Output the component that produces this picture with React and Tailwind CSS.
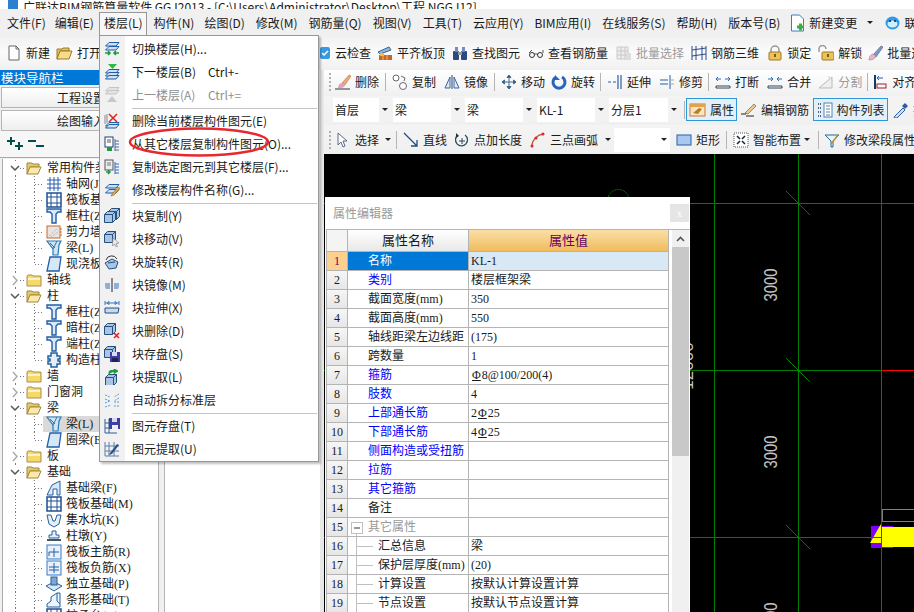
import React from 'react';

const Svg = ({ children, w = 16, h = 16 }) => (
  <svg width={w} height={h} viewBox={`0 0 ${w} ${h}`} className="shrink-0">{children}</svg>
);

const B = '#1f5fa8';
const Plate = ({ y = 0, f = '#cfe0f5', s = B }) => (
  <path d={`M5 ${y + 0.5}h10l-3 3.5H1.5z`} fill={f} stroke={s} />
);
const Cube = ({ x = 1, y = 1, f = '#a9c4e4', s = '#24507f' }) => (
  <g>
    <path d={`M${x + 0.5} ${y + 3.5}l3-3h8v8l-3 3h-8z`} fill={f} stroke={s} />
    <path d={`M${x + 0.5} ${y + 3.5}h8v8M${x + 8.5} ${y + 3.5}l3-3`} fill="none" stroke={s} />
  </g>
);

// menu icons
const MI = {
  switch: <Svg><Plate y={1} /><Plate y={5} /><path d="M1 12h5M4 10l2 2-2 2M15 12h-5M12 10l-2 2 2 2" fill="none" stroke="#1d9a3c" strokeWidth="1.6" /></Svg>,
  down: <Svg><path d="M4 0h9l-4.5 5z" fill="#2fb84a" /><Plate y={5} /><Plate y={8} /><Plate y={11} /></Svg>,
  up: <Svg><Plate y={0} f="#e4e4e4" s="#c4c4c4" /><Plate y={3} f="#e4e4e4" s="#c4c4c4" /><path d="M8 9l5 6H3z" fill="#c8c8c8" /></Svg>,
  del: <Svg><path d="M1 2v9M3 1v9" stroke="#8a8a8a" /><Plate y={9} /><Plate y={11} /><path d="M5 1l8 8M13 1L5 9" stroke="#e02020" strokeWidth="1.5" /></Svg>,
  copyFrom: <Svg><rect x="1" y="1" width="8" height="10" fill="#fff" stroke="#1f3f7a" /><path d="M3 4h4M3 6h4" stroke="#555" /><path d="M3 11h5v4H3z" fill="#1d9a3c" /><path d="M11 5h4M11 8h4M11 11h4M11 14h4M11 3v12" stroke="#4a6f9a" fill="none" /></Svg>,
  copyTo: <Svg><rect x="1" y="1" width="8" height="10" fill="#eee" stroke="#555" /><path d="M3 4h4M3 6h4" stroke="#777" /><path d="M2 13h4M4 11l2 2-2 2" stroke="#1d9a3c" strokeWidth="1.5" fill="none" /><path d="M11 5h4M11 8h4M11 11h4M11 14h4M11 3v12" stroke="#2f6fc0" fill="none" /></Svg>,
  rename: <Svg><Plate y={2} /><Plate y={7} /><path d="M8 12l6-7 2 1-6 7-3 1z" fill="#e8a93a" stroke="#8a6a20" strokeWidth=".6" /></Svg>,
  bCopy: <Svg><Cube x={4} y={0} /><Cube x={0} y={3} /></Svg>,
  bMove: <Svg><Cube x={0} y={0} /><path d="M9 7l6 5-3 .5 1.5 3-1.5.5-1.5-3-2 2z" fill="#eee" stroke="#888" strokeWidth=".7" /></Svg>,
  bRot: <Svg><path d="M2 6a6 6 0 0 1 11-1" fill="none" stroke="#333" /><path d="M1 9l7-4 6 3-2 6-7 1z" fill="#a9c4e4" stroke="#24507f" /><path d="M4 9l7-1" stroke="#24507f" /></Svg>,
  bMirror: <Svg><path d="M8 1v14" stroke="#222" /><path d="M1 6h5v6H2l-1-2z" fill="#8fb0d6" /><path d="M15 6h-5v6h4l1-2z" fill="#8fb0d6" /></Svg>,
  bStretch: <Svg><path d="M1 3h14M1 1v4M15 1v4M3 3l2-1.5v3zM13 3l-2-1.5v3z" stroke="#3a7cc8" fill="none" /><path d="M1 8h14l-1 5H1z" fill="#c7d9ee" stroke="#24507f" /></Svg>,
  bDel: <Svg><Cube x={0} y={0} /><path d="M10 10l5 5M15 10l-5 5" stroke="#e02020" strokeWidth="1.5" /></Svg>,
  bSave: <Svg><Cube x={0} y={0} /><rect x="6" y="6" width="10" height="10" fill="#3e3e9e" /><rect x="8" y="6" width="5" height="4" fill="#d8d8f0" /><rect x="8" y="12" width="6" height="4" fill="#222258" /></Svg>,
  bGet: <Svg><path d="M5 5v-1.500a2 2 0 0 1 2-2h5M10 0l4 2-4 2.500z" fill="#1d9a3c" stroke="#1d9a3c" /><Cube x={1} y={5} /></Svg>,
  auto: <Svg><path d="M1 3l5 2M1 7l5 2M1 11l5-2M1 15l6-2M15 2l-5 3M15 6l-5 3M15 10h-5M15 14h-6" stroke="#5b9bd5" strokeDasharray="2 1" /></Svg>,
  eSave: <Svg><path d="M1 1v14h12M1 5h9M1 10h9M5 1v14" stroke="#2f5f9a" fill="none" /><rect x="5" y="0" width="11" height="11" fill="#3e3e9e" /><rect x="8" y="0" width="5" height="4" fill="#d8d8f0" /><rect x="8" y="7" width="6" height="4" fill="#eee" /></Svg>,
  eGet: <Svg><path d="M1 1v14h14M1 5h14M1 10h14M5 1v14M10 1v14" stroke="#5c7fa8" fill="none" /><path d="M6 12l7-9 2 1-7 9-3 1z" fill="#2f4f8f" /></Svg>,
};

const menu = [
  { i: 'switch', t: '切换楼层(H)...' },
  { i: 'down', t: '下一楼层(B)', k: 'Ctrl+-' },
  { i: 'up', t: '上一楼层(A)', k: 'Ctrl+=', off: true },
  null,
  { i: 'del', t: '删除当前楼层构件图元(E)' },
  { i: 'copyFrom', t: '从其它楼层复制构件图元(O)...' },
  { i: 'copyTo', t: '复制选定图元到其它楼层(F)...' },
  { i: 'rename', t: '修改楼层构件名称(G)...' },
  null,
  { i: 'bCopy', t: '块复制(Y)' },
  { i: 'bMove', t: '块移动(V)' },
  { i: 'bRot', t: '块旋转(R)' },
  { i: 'bMirror', t: '块镜像(M)' },
  { i: 'bStretch', t: '块拉伸(X)' },
  { i: 'bDel', t: '块删除(D)' },
  { i: 'bSave', t: '块存盘(S)' },
  { i: 'bGet', t: '块提取(L)' },
  { i: 'auto', t: '自动拆分标准层' },
  null,
  { i: 'eSave', t: '图元存盘(T)' },
  { i: 'eGet', t: '图元提取(U)' },
];

function FloorMenu() {
  return (
    <div className="absolute left-[-5px] top-[25px] z-50 w-[220px] h-[427px] border border-[#979797] bg-white py-[1px] shadow-[2px_2px_2px_rgba(0,0,0,0.25)]">
      <div className="absolute left-0 top-0 bottom-0 w-[25px] bg-[#f1f1f1]" />
      {menu.map((m, i) =>
        m ? (
          <div key={i} className={`relative flex items-center h-[23px] ${m.off ? 'text-[#8f8f8f]' : 'text-[#1a1a1a]'}`}>
            <span className="w-[32px] pl-[4px] flex items-center">{MI[m.i]}</span>
            <span className="w-[76px] whitespace-nowrap">{m.t}</span>
            {m.k && <span className="whitespace-nowrap">{m.k}</span>}
          </div>
        ) : (
          <div key={i} className="relative h-[3px] ml-[32px] mr-[1px] border-b border-[#c4c4c4]" />
        )
      )}
      <svg width="146" height="32" className="absolute left-[28px] top-[90px]">
        <ellipse cx="71" cy="16" rx="69" ry="13.500" fill="none" stroke="#e8282f" strokeWidth="2.500" />
      </svg>
    </div>
  );
}

const menuBar = [['文件(F)', '-mr-[2px]'], ['编辑(E)', '-mr-[1px]'], ['楼层(L)'], ['构件(N)', '-mr-[1px]'], ['绘图(D)'], ['修改(M)'], ['钢筋量(Q)'], ['视图(V)'], ['工具(T)'], ['云应用(Y)'], ['BIM应用(I)'], ['在线服务(S)'], ['帮助(H)'], ['版本号(B)']];

function MenuBar() {
  return (
    <div className="h-[26px] pt-[1px] bg-[#f0f0f0] flex items-center pl-[7px] gap-[11px] text-[#1a1a1a] whitespace-nowrap shrink-0">
      {menuBar.map(([t, cls]) =>
        t === '楼层(L)' ? (
          <div key={t} className="relative h-[25px] flex items-center">
            <div className="absolute left-[-5px] right-[-4px] top-[2px] bottom-0 border border-b-0 border-[#979797] bg-[#f7f7f7]" />
            <span className="relative">{t}</span>
            <FloorMenu />
          </div>
        ) : (
          <span key={t} className={cls}>{t}</span>
        )
      )}
      <span className="-ml-[2px] flex">
        <Svg w={17} h={18}>
          <path d="M2.500 1h8l4 4v12h-12z" fill="#fff" stroke="#3a7cc8" />
          <path d="M8 13h7M11.500 9.500v7" stroke="#3fae3f" strokeWidth="3" />
        </Svg>
      </span>
      <span className="-ml-[8px]">新建变更</span>
      <Arrow className="ml-[-1px]" />
      <Svg w={17} h={16}>
        <ellipse cx="8.500" cy="8" rx="7" ry="6.500" fill="#2f9ae8" />
        <ellipse cx="8.500" cy="9" rx="5" ry="3.500" fill="#cfefff" />
        <circle cx="6" cy="6" r="1" fill="#123" /><circle cx="11" cy="6" r="1" fill="#123" />
      </Svg>
      <span className="-ml-[8px]">联系我们</span>
    </div>
  );
}

const Arrow = ({ className = '' }) => (
  <span className={`inline-block w-0 h-0 border-x-[3px] border-x-transparent border-t-[3px] border-t-[#222] shrink-0 ${className}`} />
);

// toolbar icons
const TI = {
  newf: <Svg><path d="M3 1h7l3 3v11H3z" fill="#fff" stroke="#666" /><path d="M10 1v3h3" fill="none" stroke="#666" /></Svg>,
  open: <Svg w={17}><path d="M1 4h5l1-1h6v3H4l-2 8H1z" fill="#e8c060" stroke="#9a7a20" /><path d="M4 6h12l-3 8H1z" fill="#f6dc8c" stroke="#9a7a20" /></Svg>,
  cloud: <Svg w={11}><rect x="0" y="2" width="10" height="12" rx="2" fill="#3a9ae0" /><path d="M2 8l2 2 4-4" stroke="#fff" fill="none" strokeWidth="1.500" /></Svg>,
  flush: <Svg><path d="M1 7l11-5 2 3L3 9z" fill="#8fb8e0" stroke="#3a5f90" /><rect x="2" y="10" width="13" height="5" fill="#c8652a" /><path d="M6 10v5M10 10v5" stroke="#efc040" /><rect x="3" y="8" width="4" height="3" fill="#efc040" /></Svg>,
  find: <Svg><rect x="1" y="6" width="6" height="9" rx="1" fill="#2a4a80" /><rect x="9" y="6" width="6" height="9" rx="1" fill="#2a4a80" /><rect x="3" y="2" width="3" height="5" fill="#6f8fbf" /><rect x="10" y="2" width="3" height="5" fill="#6f8fbf" /><rect x="6" y="7" width="4" height="3" fill="#999" /></Svg>,
  glasses: <Svg><circle cx="4" cy="10" r="2.500" fill="none" stroke="#333" /><circle cx="12" cy="10" r="2.500" fill="none" stroke="#333" /><path d="M6 9h4M1 8l3-3M15 8V5" stroke="#555" fill="none" /></Svg>,
  batch: <Svg><path d="M1 2h11v12H1zM1 6h11M1 10h11M5 2v12M9 2v12" fill="#eee" stroke="#c8c8c8" /><path d="M10 8h5v7h-5z" fill="#ddd" /></Svg>,
  rebar3d: <Svg><path d="M1 1v14M15 1v14M5 1v14M11 1v14M1 5l14-2M1 11l14-2" stroke="#2a4a90" fill="none" /></Svg>,
  lock: <Svg><path d="M4 8V5a4 4 0 0 1 8 0v3" fill="none" stroke="#999" strokeWidth="1.500" /><rect x="2" y="7" width="12" height="8" rx="1" fill="#ecc35a" stroke="#a07820" /><path d="M8 9v3" stroke="#503a10" strokeWidth="1.500" /></Svg>,
  unlock: <Svg><path d="M1 7V4a3.500 3.500 0 0 1 7 0" fill="none" stroke="#999" strokeWidth="1.500" /><rect x="4" y="7" width="12" height="8" rx="1" fill="#ecc35a" stroke="#a07820" /><path d="M10 9v3" stroke="#503a10" strokeWidth="1.500" /></Svg>,
  brush: <Svg><path d="M6 10L14 1l2 1-7 10z" fill="#7a9ad0" stroke="#345" strokeWidth=".5" /><path d="M2 15c0-3 2-6 4-6l3 2c-1 3-4 4-7 4z" fill="#e8b8c8" stroke="#a06070" strokeWidth=".5" /></Svg>,
  erase: <Svg><path d="M7 9L14 1l2 1-6 9z" fill="#e8b060" stroke="#805" strokeWidth=".3" /><path d="M3 14c0-3 2-5 4-5l3 2c-1 3-3 3-7 3z" fill="#e0a0c0" /><path d="M0 15h15" stroke="#333" /></Svg>,
  copy: <Svg><circle cx="4" cy="4" r="3" fill="#fff" stroke="#667" /><circle cx="11" cy="12" r="3.500" fill="#fff" stroke="#667" /><path d="M9 2l4 2-1 3" stroke="#667" fill="none" /></Svg>,
  mirror: <Svg><path d="M8 1v14" stroke="#345" /><path d="M6 3L1 14h5zM10 3l5 11h-5z" fill="#dfe9f6" stroke="#3a66a8" /></Svg>,
  move: <Svg><path d="M8 1v14M1 8h14M8 1L6 3.500h4zM8 15l-2-2.500h4zM1 8l2.500-2v4zM15 8l-2.500-2v4z" fill="#345" stroke="#456a90" /></Svg>,
  rotate: <Svg><path d="M5 3a6 6 0 1 0 6 0" fill="none" stroke="#2a62c0" strokeWidth="3" /><path d="M4 1v5h5" fill="#2a62c0" /></Svg>,
  extend: <Svg><path d="M1 8h3M6 8h3M11 1v14M14 1v14" stroke="#2a5fa8" fill="none" strokeWidth="1.200" /></Svg>,
  trim: <Svg><path d="M1 6h8M1 10h8M11 1v14" stroke="#2a5fa8" fill="none" /><path d="M12 6h3M12 10h3" stroke="#9ab" /></Svg>,
  brk: <Svg><path d="M1 5h5M10 5h5M3 3L1 5l2 2M13 3l2 2-2 2" stroke="#2a6fc0" fill="none" /><path d="M1 12h14v2H1z" fill="#fff" stroke="#345" /></Svg>,
  merge: <Svg><path d="M1 5h5M10 5h5M4 3l2 2-2 2M12 3l-2 2 2 2" stroke="#2a6fc0" fill="none" /><path d="M1 12h14v2H1z" fill="#fff" stroke="#345" /></Svg>,
  split: <Svg><path d="M1 14L14 3v11z" fill="#eee" stroke="#bbb" /><path d="M10 2l5 5" stroke="#ccc" /></Svg>,
  align: <Svg w={14}><path d="M1 1v14" stroke="#123a6a" strokeWidth="2" /><path d="M3 4h6M3 4l2-2M3 4l2 2" stroke="#2a5fa8" fill="none" /><rect x="3" y="10" width="9" height="4" fill="none" stroke="#a02030" /></Svg>,
  prop: <Svg w={17}><rect x="1" y="2" width="15" height="12" fill="#fbe6c0" stroke="#c87830" /><path d="M1 2h15v3H1z" fill="#e8a04a" /><path d="M4 11l6-5 3 1-4 5z" fill="#b08030" /></Svg>,
  editbar: <Svg><path d="M4 11L13 2l2 2-8 8z" fill="#e8c890" stroke="#554" strokeWidth=".6" /><path d="M0 12h5M5 14h8" stroke="#222" /></Svg>,
  list: <Svg><path d="M1 2h3M1 6h3M1 10h3M1 14h3" stroke="#567" strokeDasharray="1 1" strokeWidth="2" /><rect x="7" y="1" width="8" height="14" fill="#fff" stroke="#5a7fa8" /><path d="M9 4h4M9 7h4M9 10h4M9 13h4" stroke="#5a7fa8" /></Svg>,
  pick: <Svg><path d="M2 14l8-8 2 2-8 8-3 0z" fill="#cfe0f5" stroke="#2a5fa8" /><path d="M9 4l3-3 3 3-3 3z" fill="#2a5fa8" /></Svg>,
  select: <Svg><path d="M3 1v12l3-3 2 5 2-1-2-5h4z" fill="#fff" stroke="#5a6a88" /></Svg>,
  line: <Svg><path d="M1 1l13 13M14 8v6H8" stroke="#234a80" fill="none" strokeWidth="1.300" /></Svg>,
  ptlen: <Svg><path d="M11 3a6 6 0 1 1-7 0" fill="none" stroke="#2a5068" strokeWidth="1.300" /><path d="M8 6v6M5 9h6" stroke="#345" /><path d="M2 1l3 3-3 2z" fill="#234" /></Svg>,
  arc: <Svg><path d="M2 14C2 8 7 3 13 2" fill="none" stroke="#c05a30" strokeWidth="1.300" /><circle cx="2" cy="14" r="1.500" fill="#d23" /><circle cx="6" cy="6" r="1.500" fill="#d23" /><circle cx="13" cy="2" r="1.500" fill="#d23" /></Svg>,
  rect: <Svg><rect x="1" y="3" width="14" height="10" fill="#a9c8f0" stroke="#2a5fa8" /></Svg>,
  smart: <Svg><rect x="1" y="1" width="14" height="14" fill="#fff" stroke="#555" strokeDasharray="1 1" /><path d="M4 4l3 3M12 4L9 7M4 12l3-3M12 12L9 9" stroke="#123" strokeWidth="1.500" /></Svg>,
  seg: <Svg><path d="M1 3h14L9 9v6H7V9z" fill="#e8f3fb" stroke="#2a6a90" /><path d="M7 12l7-9" stroke="#b89040" strokeWidth="1.500" /></Svg>,
};

const Tool = ({ i, t, off, mr = 'mr-[8px]' }) => (
  <div className={`flex items-center gap-[4px] shrink-0 whitespace-nowrap ${mr} ${off ? 'text-[#9a9a9a]' : 'text-[#1a1a1a]'}`}>
    {TI[i]}
    <span>{t}</span>
  </div>
);
const Sep = () => <span className="w-px h-[18px] bg-[#b5b5b5] -ml-[2px] mr-[6px] shrink-0" />;
const Grip = () => (
  <span className="w-[2px] h-[18px] ml-[5px] mr-[4px] shrink-0 border-l-2 border-dotted border-[#b0b0b0]" />
);

function Combo({ t, w }) {
  return (
    <div className={`${w} h-[24px] bg-white flex items-center justify-between mr-[2px] shrink-0`}>
      <span className="pl-[2px]">{t}</span>
      <span className="w-[12px] h-full bg-[#f2f2f2] flex items-center justify-center"><Arrow /></span>
    </div>
  );
}

function Toggle({ i, t, w }) {
  return (
    <div className={`${w} h-[23px] flex items-center justify-center gap-[4px] border-[1.5px] border-[#2f96d8] bg-[#e3f0fa] shrink-0`}>
      {TI[i]}<span>{t}</span>
    </div>
  );
}

// tree icons
const Col = <Svg><path d="M1 1h14v3h-3L10 6v9H6V6L4 4H1z" fill="#dbe8f7" stroke="#1f5fa8" strokeWidth="1.400" /></Svg>;
const Raft = <Svg><rect x="1" y="1" width="14" height="14" fill="#fff" stroke="#1f4f90" strokeWidth="1.500" /><path d="M5 1v14M11 1v14M1 5h14M1 11h14" stroke="#1f4f90" /></Svg>;
const Beam = <Svg><path d="M1 1h14l-2 4-1 10H7V9z" fill="#cfe4f5" stroke="#2a7ab0" strokeWidth="1.200" /><path d="M4 3l5 5M11 1L7 9" stroke="#2a7ab0" /></Svg>;
const Slab = <Svg><path d="M4 1h11l-2 14H1z" fill="#d6e7f8" stroke="#1f5fa8" strokeWidth="1.300" /></Svg>;
const TIcons = {
  grid: <Svg><path d="M1 4h14M1 8h14M1 12h14M4 1v14M8 1v14M12 1v14" stroke="#2a5fb0" fill="none" /></Svg>,
  raft: Raft, col: Col, beam: Beam, slab: Slab,
  wall: <Svg><rect x="1" y="2" width="13" height="12" fill="#e8e4e0" stroke="#c8682a" /><path d="M14 5h2M14 8h2M14 11h2" stroke="#c8682a" /><path d="M3 12l8-7M5 13l7-5" stroke="#aaa" strokeDasharray="1 1" /></Svg>,
  gear: <Svg><path d="M5 1h6v3h3v3h-2v2h2v3h-3v3H5v-3H2V9h2V7H2V4h3z" fill="#e6eef8" stroke="#24609f" strokeWidth="1.500" /></Svg>,
  fbeam: <Svg><path d="M1 15L6 5l8-4v14h-3V9L7 9v6z" fill="#dbe8f7" stroke="#24609f" /></Svg>,
  sump: <Svg><path d="M1 3h4l2 6h2l2-6h4L13 12l-5 3-5-3z" fill="#e6eef8" stroke="#24609f" /></Svg>,
  pier: <Svg><path d="M6 3h4v4h3v3H3V7h3z" fill="#e6eef8" stroke="#24609f" /><path d="M1 12h14" stroke="#456" strokeWidth="2" /></Svg>,
  mainb: <Svg><rect x="1" y="1" width="14" height="14" fill="#e8f1fb" stroke="#3a7ac0" /><path d="M8 4v9M3 8h10M3 8v4" stroke="#1f5fa8" fill="none" /></Svg>,
  negb: <Svg><rect x="1" y="1" width="14" height="14" fill="#e8f1fb" stroke="#3a7ac0" /><path d="M8 3v10M3 7h10M3 10h10" stroke="#1f5fa8" /></Svg>,
  iso: <Svg><path d="M0 10l8-4 8 4-8 5z" fill="#dbe8f7" stroke="#24609f" /><rect x="5" y="1" width="6" height="8" fill="#7fa5d0" stroke="#24609f" /></Svg>,
  strip: <Svg><path d="M1 15V12l4-3V5l6-4h3v14z" fill="#eef4fb" stroke="#24609f" /><path d="M11 1v8l3 3" fill="none" stroke="#24609f" /></Svg>,
};

const tree = [
  ['o', '常用构件类型'], ['c', '轴网(J)', 'grid'], ['c', '筏板基础(M)', 'raft'], ['c', '框柱(Z)', 'col'], ['c', '剪力墙(Q)', 'wall'], ['c', '梁(L)', 'beam'], ['l', '现浇板(B)', 'slab'],
  ['f', '轴线'],
  ['o', '柱'], ['c', '框柱(Z)', 'col'], ['c', '暗柱(Z)', 'col'], ['c', '端柱(Z)', 'col'], ['l', '构造柱(Z)', 'gear'],
  ['f', '墙'], ['f', '门窗洞'],
  ['o', '梁'], ['s', '梁(L)', 'beam'], ['l', '圈梁(E)', 'slab'],
  ['f', '板'],
  ['o', '基础'], ['c', '基础梁(F)', 'fbeam'], ['c', '筏板基础(M)', 'raft'], ['c', '集水坑(K)', 'sump'], ['c', '柱墩(Y)', 'pier'], ['c', '筏板主筋(R)', 'mainb'], ['c', '筏板负筋(X)', 'negb'], ['c', '独立基础(P)', 'iso'], ['c', '条形基础(T)', 'strip'], ['c', '桩承台(V)', 'raft'],
];

const dots = '#777';
function TreeRow({ kind, text, icon }) {
  if (kind === 'o' || kind === 'f') {
    return (
      <div className="h-4 flex items-center whitespace-nowrap">
        <svg width="23" height="16" className="shrink-0">
          <path d="M12.500 0v16" stroke={dots} strokeDasharray="1 2" />
          <path d="M17 8.500h6" stroke={dots} strokeDasharray="1 2" />
          <rect x="6" y="3" width="11" height="11" fill="#fff" />
          {kind === 'o'
            ? <path d="M8 6l4 4 4-4" fill="none" stroke="#555" strokeWidth="1.500" />
            : <path d="M10 4l4 4.500-4 4.500" fill="none" stroke="#aaa" strokeWidth="1.500" />}
        </svg>
        <Svg w={16} h={14}>
          {kind === 'o'
            ? <g><path d="M1 2h5l1 1h6v3H4l-3 7z" fill="#e8c868" stroke="#a08840" /><path d="M4 6h11l-3 7H1z" fill="#fbe9a8" stroke="#a08840" /></g>
            : <g><path d="M1 3l1-1h4l1 1h8v10H1z" fill="#f7d868" stroke="#a89050" /><path d="M2 5h12v2H2z" fill="#fff5c8" /></g>}
        </Svg>
        <span className="ml-[5px]">{text}</span>
      </div>
    );
  }
  return (
    <div className="h-4 flex items-center whitespace-nowrap">
      <svg width="40" height="16" className="shrink-0">
        <path d="M12.500 0v16" stroke={dots} strokeDasharray="1 2" />
        <path d={kind === 'l' ? 'M31.500 0v8' : 'M31.500 0v16'} stroke={dots} strokeDasharray="1 2" />
        <path d="M32 8.500h8" stroke={dots} strokeDasharray="1 2" />
      </svg>
      <div className={`flex items-center h-4 gap-[4px] pl-[3px] ${kind === 's' ? 'bg-[#d9d9d9] w-[60px]' : ''}`}>
        {TIcons[icon]}
        <span>{text}</span>
      </div>
    </div>
  );
}

function LeftNav() {
  return (
    <div className="w-[158px] shrink-0 flex flex-col bg-[#f0f0f0] overflow-hidden">
      <div className="h-[15px] bg-[#0078d7] text-white text-[12.5px] leading-[15px] pl-[1px] shrink-0">模块导航栏</div>
      <div className="h-[21px] mt-[2px] mx-[1px] border border-[#b5b5b5] bg-gradient-to-b from-white to-[#eeeeee] flex items-center pl-[55px] shrink-0">工程设置</div>
      <div className="h-[21px] mt-[2px] mx-[1px] border border-[#b5b5b5] bg-gradient-to-b from-white to-[#eeeeee] flex items-center pl-[55px] shrink-0">绘图输入</div>
      <div className="h-[27px] flex items-center pl-[7px] gap-[5px] shrink-0 bg-[#f6f6f6] border-b border-[#a9a9a9]">
        <Svg w={16} h={14}><path d="M4 0v8M0 4h8M12 5v8M8 9h8" stroke="#004f4f" strokeWidth="2" /></Svg>
        <Svg w={16} h={14}><path d="M0 4h8M8 9h8" stroke="#004f4f" strokeWidth="2" /></Svg>
      </div>
      <div className="flex-1 ml-[2px] mt-[1px] pt-[1px] border-l border-[#a9a9a9] bg-white overflow-hidden font-['Liberation_Serif','Noto_Sans_CJK_SC',sans-serif]">
        {tree.map((r, i) => <TreeRow key={i} kind={r[0]} text={r[1]} icon={r[2]} />)}
      </div>
    </div>
  );
}

const Bar = <span className="inline-block underline mx-[1px]">Φ</span>;

const rows = [
  ['名称', 'KL-1', 'sel'],
  ['类别', '楼层框架梁', 'link'],
  ['截面宽度(mm)', '350'],
  ['截面高度(mm)', '550'],
  ['轴线距梁左边线距', '(175)'],
  ['跨数量', '1'],
  ['箍筋', <>{Bar}8@100/200(4)</>, 'link2'],
  ['肢数', '4', 'link'],
  ['上部通长筋', <>2{Bar}25</>, 'link'],
  ['下部通长筋', <>4{Bar}25</>, 'link'],
  ['侧面构造或受扭筋', '', 'link'],
  ['拉筋', '', 'link'],
  ['其它箍筋', '', 'link'],
  ['备注', ''],
  ['其它属性', '', 'group'],
  ['汇总信息', '梁', 'child'],
  ['保护层厚度(mm)', '(20)', 'child'],
  ['计算设置', '按默认计算设置计算', 'child'],
  ['节点设置', '按默认节点设置计算', 'child'],
];

function PropRow({ n, name, value, kind }) {
  const sel = kind === 'sel';
  const link = kind === 'link' || kind === 'link2';
  return (
    <div className="flex h-[19px] border-b border-[#b4b4b4] leading-[18px]">
      <div className={`w-[21px] border-r border-[#b4b4b4] text-center shrink-0 ${sel ? 'bg-[#fdd08f] text-[#660066]' : 'bg-gradient-to-b from-[#f6f6f6] to-[#e6e6e6]'}`}>{n}</div>
      <div className={`w-[121px] border-r border-[#b4b4b4] flex items-center whitespace-nowrap shrink-0 ${sel ? 'bg-[#0078d7] text-white' : ''} ${link ? 'text-[#0000ff]' : ''} ${kind === 'group' ? 'text-[#999999]' : ''}`}>
        {kind === 'group' && (
          <svg width="20" height="18" className="shrink-0">
            <rect x="3.500" y="4.500" width="11" height="11" fill="#fff" stroke="#c0c0c0" />
            <path d="M6 10h6" stroke="#333" />
            <path d="M8.500 15.500V18" stroke="#c0c0c0" />
          </svg>
        )}
        {kind === 'child' && (
          <svg width="30" height="18" className="shrink-0">
            <path d="M8.500 0v19M9 9.500h16" stroke="#c0c0c0" />
          </svg>
        )}
        {kind !== 'group' && kind !== 'child' && <span className="w-[20px] shrink-0" />}
        <span>{name}</span>
      </div>
      <div className={`w-[200px] pl-[2px] border-r border-[#b4b4b4] whitespace-nowrap ${sel ? 'bg-[#d8e8f5]' : ''}`}>{value}</div>
    </div>
  );
}

function PropEditor() {
  return (
    <div className="absolute left-[1px] top-[43px] bottom-0 w-[365px] z-10 bg-white flex flex-col overflow-hidden font-['Liberation_Serif','Noto_Sans_CJK_SC',sans-serif] text-[#1a1a1a]">
      <div className="h-[32px] flex items-center justify-between pl-[8px] pr-[1px] shrink-0">
        <span className="text-[#9a9a9a] font-['Noto_Sans_CJK_SC',sans-serif]">属性编辑器</span>
        <span className="w-[19px] h-[18px] bg-[#e5e5e5] text-white text-[11px] leading-[18px] text-center">x</span>
      </div>
      <div className="flex-1 flex ml-[1px] border-t border-l border-[#b4b4b4] overflow-hidden">
        <div className="w-[342px] shrink-0">
          <div className="flex h-[22px] text-[13px] border-b border-[#b4b4b4]">
            <div className="w-[21px] border-r border-[#b4b4b4] bg-[#f4f4f4] shrink-0" />
            <div className="w-[121px] border-r border-[#b4b4b4] bg-gradient-to-b from-white to-[#e8e8e8] flex items-center justify-center shrink-0">属性名称</div>
            <div className="w-[200px] border-r border-[#b4b4b4] bg-gradient-to-b from-[#fbdfa5] to-[#f0bc5c] text-[#660066] flex items-center justify-center">属性值</div>
          </div>
          {rows.map((r, i) => <PropRow key={i} n={i + 1} name={r[0]} value={r[1]} kind={r[2]} />)}
        </div>
        <div className="w-[17px] ml-[3px] flex flex-col bg-[#f0f0f0] shrink-0">
          <div className="h-[17px] flex items-center justify-center shrink-0">
            <svg width="9" height="6"><path d="M1 5l3.500-3.500L8 5" fill="none" stroke="#555" strokeWidth="1.600" /></svg>
          </div>
          <div className="h-[209px] bg-[#c8c8c8] shrink-0" />
        </div>
      </div>
    </div>
  );
}

function Canvas() {
  const xs = [714, 798];
  const ys = [203, 370, 537];
  const ox = 324;
  const oy = 154;
  return (
    <div className="flex-1 relative bg-black overflow-hidden">
      <svg width="590" height="458" viewBox={`${ox} ${oy} 590 458`} className="block">
        {ys.map((y) => (
          <g key={y}>
            <path d={`M${ox} ${y + 0.5}H881`} stroke="#008000" />
            <path d={`M881 ${y + 0.5}H914`} stroke={y === 537 ? '#008000' : '#ff0000'} />
          </g>
        ))}
        {xs.map((x) => <path key={x} d={`M${x + 0.5} ${oy}V612`} stroke="#008000" />)}
        {ys.map((y) => <path key={y} d={`M786 ${y - 12}L810 ${y + 12}`} stroke="#008000" />)}
        <circle cx="618.500" cy="200" r="10.500" fill="none" stroke="#008000" strokeDasharray="2 1" />
        {[285, 452, 619].map((y) => (
          <text key={y} transform={`translate(777 ${y}) rotate(-90)`} textAnchor="middle" fontFamily="Liberation Sans" fontSize="19" fill="#c4c4c4" textLength="33" lengthAdjust="spacingAndGlyphs">3000</text>
        ))}
        <text transform="translate(692.500 366) rotate(-90)" textAnchor="middle" fontFamily="Liberation Sans" fontSize="17" fill="#c4c4c4">12000</text>
        <rect x="871" y="526" width="22" height="22" fill="#7f00ff" />
        <rect x="881" y="527" width="33" height="20" fill="#ffff00" />
        <path d="M881 524L870 543H881z" fill="#ffff00" />
        <path d="M871 537.500H881" stroke="#008000" />
        <rect x="882.500" y="509.500" width="32" height="12" fill="none" stroke="#808080" />
        <path d={`M881.500 ${oy}V612`} stroke="#ff0000" />
      </svg>
      <PropEditor />
    </div>
  );
}

export default function App() {
  return (
    <div className="w-[914px] h-[612px] flex flex-col overflow-hidden bg-[#f0f0f0] text-[12px] leading-[16px] text-[#1a1a1a] font-['Noto_Sans_CJK_SC',sans-serif]">
      <div className="h-[9px] bg-white overflow-hidden relative shrink-0 flex items-end pl-[8px] gap-[5px] whitespace-nowrap">
        <span className="w-[10px] h-[9px] bg-[#2f7fd0] shrink-0" />
        <span className="leading-[16px] -mb-[6px]">广联达BIM钢筋算量软件 GGJ2013 - [C:\Users\Administrator\Desktop\工程 NGGJ12]</span>
      </div>
      <MenuBar />
      <div className="h-[35px] shrink-0 flex items-center pl-[6px] bg-gradient-to-b from-[#f0f0f0] via-[#fbfbfb] to-[#f0f0f0]">
        <Tool i="newf" t="新建" mr="mr-[6px]" />
        <Tool i="open" t="打开" mr="mr-[6px]" />
        <span className="w-[213px] shrink-0" />
        <Tool i="cloud" t="云检查" mr="mr-[6px]" />
        <Tool i="flush" t="平齐板顶" mr="mr-[7px]" />
        <Tool i="find" t="查找图元" mr="mr-[8px]" />
        <Tool i="glasses" t="查看钢筋量" mr="mr-[8px]" />
        <Tool i="batch" t="批量选择" off mr="mr-[7px]" />
        <Tool i="rebar3d" t="钢筋三维" mr="mr-[8px]" />
        <Tool i="lock" t="锁定" mr="mr-[7px]" />
        <Tool i="unlock" t="解锁" mr="mr-[5px]" />
        <Tool i="brush" t="批量选择" />
      </div>
      <div className="flex-1 flex min-h-0">
        <LeftNav />
        <div className="w-[7px] bg-[#f0f0f0] border-x border-[#b5b5b5] shrink-0" />
        <div className="w-[155px] bg-white shrink-0" />
        <div className="w-[4px] bg-[#e8e8e8] shrink-0" />
        <div className="flex-1 flex flex-col min-w-0">
          <div className="h-[26px] pb-[2px] flex items-center shrink-0 overflow-hidden bg-gradient-to-b from-white to-[#f0f0f0]">
            <Grip />
            <Tool i="erase" t="删除" mr="mr-[8px]" />
            <Sep />
            <Tool i="copy" t="复制" />
            <Tool i="mirror" t="镜像" />
            <Sep />
            <Tool i="move" t="移动" mr="mr-[6px]" />
            <Tool i="rotate" t="旋转" mr="mr-[7px]" />
            <Sep />
            <Tool i="extend" t="延伸" />
            <Tool i="trim" t="修剪" mr="mr-[7px]" />
            <Sep />
            <Tool i="brk" t="打断" />
            <Tool i="merge" t="合并" mr="mr-[7px]" />
            <Tool i="split" t="分割" off mr="mr-[7px]" />
            <Sep />
            <Tool i="align" t="对齐" />
          </div>
          <div className="h-[29px] pb-[2px] flex items-center shrink-0 overflow-hidden bg-gradient-to-b from-[#f4f4f4] to-[#f0f0f0] pl-[9px]">
            <Combo t="首层" w="w-[58px]" />
            <Combo t="梁" w="w-[70px]" />
            <Combo t="梁" w="w-[70px]" />
            <Combo t="KL-1" w="w-[70px]" />
            <Combo t="分层1" w="w-[71px]" />
            <span className="w-px h-[18px] bg-[#b5b5b5] ml-[2px] mr-[1px] shrink-0" />
            <Toggle i="prop" t="属性" w="w-[51px]" />
            <span className="w-[4px] shrink-0" />
            <Tool i="editbar" t="编辑钢筋" mr="mr-[4px]" />
            <Toggle i="list" t="构件列表" w="w-[75px]" />
            <span className="w-[5px] shrink-0" />
            <Tool i="pick" t="拾取构件" mr="mr-0" />
          </div>
          <div className="h-[29px] flex items-center shrink-0 overflow-hidden bg-gradient-to-b from-[#f4f4f4] to-[#f0f0f0]">
            <Grip />
            <Tool i="select" t="选择" mr="mr-[6px]" />
            <Arrow className="mr-[7px]" />
            <Sep />
            <Tool i="line" t="直线" mr="mr-[7px]" />
            <Tool i="ptlen" t="点加长度" mr="mr-[8px]" />
            <Tool i="arc" t="三点画弧" mr="mr-[7px]" />
            <Arrow className="mr-[3px]" />
            <div className="w-[56px] h-[24px] bg-white flex items-center justify-end pr-[3px] mr-[6px] shrink-0"><Arrow /></div>
            <Tool i="rect" t="矩形" mr="mr-[8px]" />
            <Sep />
            <Tool i="smart" t="智能布置" mr="mr-[3px]" />
            <Arrow className="mr-[8px]" />
            <span className="w-px h-[18px] bg-[#b5b5b5] mr-[5px] shrink-0" />
            <Tool i="seg" t="修改梁段属性" mr="mr-0" />
          </div>
          <Canvas />
        </div>
      </div>
    </div>
  );
}
